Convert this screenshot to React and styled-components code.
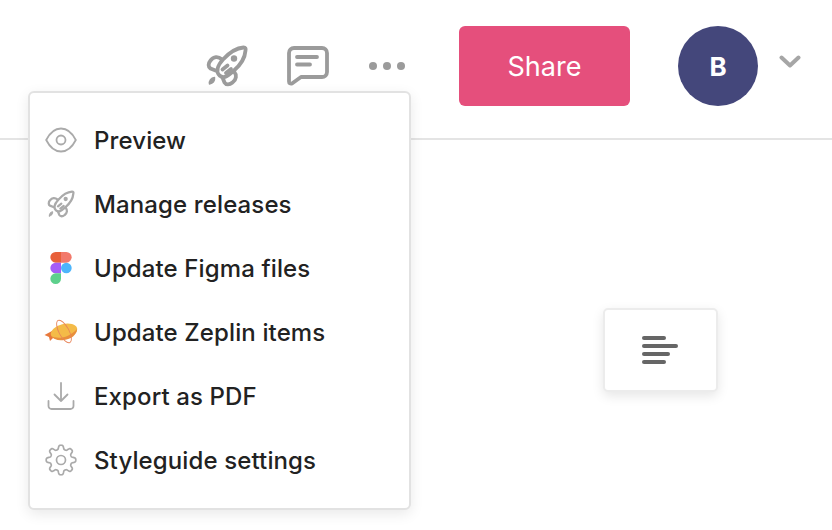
import React from "react";
import styled, {createGlobalStyle} from "styled-components";

const GlobalStyle = createGlobalStyle`
  html, body {
    margin: 0;
    padding: 0;
    background: #fff;
    overflow: hidden;
  }
  body {
    font-family: Inter, "Liberation Sans", sans-serif;
  }
`

const Page = styled.div`
  position: relative;
  width: 832px;
  height: 530px;
  background: #fff;
  overflow: hidden;
`

const Header = styled.header`
  display: flex;
  align-items: flex-start;
  height: 112px;
  padding: 26px 31px 0 206px;
  border-bottom: 2px solid #e4e4e4;
`

const HeaderIcons = styled.div`
  display: flex;
  align-items: center;
  height: 80px;
  width: 253px;
  flex: none;
`

const IconSlot = styled.div`
  display: flex;
  width: ${props => props.$width}px;
  flex: none;
`

const ShareButton = styled.button`
  width: 171px;
  height: 80px;
  flex: none;
  border: none;
  border-radius: 6px;
  background: #e54f7c;
  color: #fff;
  font-family: inherit;
  font-size: 27px;
  font-weight: 400;
`

const Avatar = styled.div`
  display: flex;
  align-items: center;
  justify-content: center;
  width: 80px;
  height: 80px;
  flex: none;
  margin-left: 48px;
  border-radius: 50%;
  background: #44477b;
  color: #fff;
  font-size: 26px;
  font-weight: 700;
`

const Chevron = styled.svg`
  flex: none;
  margin: 28px 0 0 21px;
`

const Canvas = styled.main`
  display: flex;
  justify-content: flex-end;
  padding: 168px 114px 0 0;
`

const AlignCard = styled.div`
  display: flex;
  align-items: center;
  justify-content: center;
  width: 115px;
  height: 84px;
  padding-right: 2px;
  background: #fff;
  border-radius: 5px;
  border: 2px solid #ececec;
  box-sizing: border-box;
  box-shadow: 0 4px 12px rgba(0, 0, 0, 0.1);
`

const Menu = styled.ul`
  position: absolute;
  left: 28px;
  top: 91px;
  width: 383px;
  height: 419px;
  box-sizing: border-box;
  margin: 0;
  padding: 15px 0 0 0;
  list-style: none;
  background: #fff;
  border: 2px solid #e2e2e2;
  border-radius: 6px;
  box-shadow: 0 4px 14px rgba(0, 0, 0, 0.09);
`

const MenuItem = styled.li`
  display: flex;
  align-items: center;
  height: 64px;
  color: #222;
  font-size: 24px;
  font-weight: 500;
  letter-spacing: 0.12px;
`

const ItemIcon = styled.span`
  display: flex;
  align-items: center;
  justify-content: center;
  width: 62px;
  height: 40px;
  margin-right: 2px;
  flex: none;
`

const Rocket = ({size, stroke = "#9b9b9b", width = 3.8}) => (
    <svg width={size} height={size} viewBox="0 0 42 42" fill="none" stroke={stroke} strokeWidth={width} strokeLinecap="round" strokeLinejoin="round">
        <path d="M13.500 30.500 C10 27 11 21 17 14.500 C23 8 30 3 37.500 2.500 C39.500 2.500 40 3.500 39.500 5.500 C39 13 34 20.500 27.500 26 C21 31.500 17.500 34 13.500 30.500 Z"/>
        <path d="M16 14.500 C12 11 7.500 11.500 4.500 15.500 C2 18.500 2 22 4.500 23.500 L9.500 25.500"/>
        <path d="M28 26.500 C31 30 30.500 34.500 26.500 37.500 C23.500 40 20 40 18.500 37.500 L16.500 32.500"/>
        <circle cx="28" cy="13.500" r="3.200" fill={stroke} stroke="none"/>
        <path d="M16.500 24.500 L21.500 20.500 M20 28 L25 24"/>
        <path d="M3.500 39 C3 36 5 33 8.500 32.500 C9 36 7 38.500 3.500 39 Z" fill={stroke} strokeWidth="1.500"/>
    </svg>
)

const Comment = () => (
    <svg width="42" height="40" viewBox="0 0 42 40" fill="none" stroke="#9b9b9b" strokeWidth="3.800" strokeLinecap="round" strokeLinejoin="round">
        <path d="M7 2 H35 A5 5 0 0 1 40 7 V26 A5 5 0 0 1 35 31 H14 L5 37.500 C3.500 38 2 37.500 2 35.500 V7 A5 5 0 0 1 7 2 Z"/>
        <path d="M10 11 H30 M10 18.500 H23"/>
    </svg>
)

const Dots = () => (
    <svg width="38" height="10" viewBox="0 0 38 10" fill="#9b9b9b">
        <circle cx="5" cy="5" r="4"/>
        <circle cx="19" cy="5" r="4"/>
        <circle cx="33" cy="5" r="4"/>
    </svg>
)

const Eye = () => (
    <svg width="32" height="26" viewBox="0 0 32 26" fill="none" stroke="#aaa" strokeWidth="1.800">
        <path d="M1.200 13 C5 5.500 10 1.500 16 1.500 C22 1.500 27 5.500 30.800 13 C27 20.500 22 24.500 16 24.500 C10 24.500 5 20.500 1.200 13 Z"/>
        <circle cx="16" cy="13" r="4.500"/>
    </svg>
)

const Figma = () => (
    <svg width="22" height="32" viewBox="0 0 38 57">
        <path fill="#e8603a" d="M0 9.500A9.500 9.500 0 0 0 9.500 19H19V0H9.500A9.500 9.500 0 0 0 0 9.500z"/>
        <path fill="#f2796b" d="M19 0v19h9.500a9.500 9.500 0 1 0 0-19H19z"/>
        <path fill="#a55cf5" d="M0 28.500A9.500 9.500 0 0 0 9.500 38H19V19H9.500A9.500 9.500 0 0 0 0 28.500z"/>
        <path fill="#4db5fb" d="M19 28.500a9.500 9.500 0 1 1 19 0 9.500 9.500 0 0 1-19 0z"/>
        <path fill="#5dd08c" d="M0 47.500A9.500 9.500 0 0 1 9.500 38H19v9.500a9.500 9.500 0 1 1-19 0z"/>
    </svg>
)

const Zeppelin = () => (
    <svg width="34" height="28" viewBox="0 0 34 28" fill="none">
        <path fill="#e8793c" d="M0.500 17 L8 13 L10 19 L6 23 L5 19 Z"/>
        <ellipse cx="20" cy="13.500" rx="13.500" ry="7.500" transform="rotate(-14 20 13.500)" fill="#f4bb48"/>
        <path fill="#e98f3c" d="M7 18 C13 21 24 21 33 11 C33 17 27 21 20 22 C14 23 9 21 7 18 Z"/>
        <ellipse cx="20" cy="13.500" rx="5" ry="12.500" transform="rotate(-28 20 13.500)" stroke="#e8855a" strokeWidth="0.900"/>
    </svg>
)

const Export = () => (
    <svg width="28" height="30" viewBox="0 0 28 30" fill="none" stroke="#aaa" strokeWidth="1.800" strokeLinecap="round" strokeLinejoin="round">
        <path d="M14 2 V20 M7.500 13.500 L14 20 L20.500 13.500"/>
        <path d="M1.500 20 V25 A3 3 0 0 0 4.500 28 H23.500 A3 3 0 0 0 26.500 25 V20"/>
    </svg>
)

// scalloped outline with 8 teeth
const gearPath = () => {
    const points = [];
    for (let i = 0; i < 240; i++) {
        const angle = (i / 240) * Math.PI * 2;
        const r = 12.8 + 2.1 * Math.tanh(1.8 * Math.cos(angle * 8));
        points.push(`${(16 + r * Math.sin(angle)).toFixed(2)} ${(16 - r * Math.cos(angle)).toFixed(2)}`);
    }
    return `M${points.join(" L")} Z`;
}

const Gear = () => (
    <svg width="32" height="32" viewBox="0 0 32 32" fill="none" stroke="#aaa" strokeWidth="1.700">
        <path d={gearPath()}/>
        <circle cx="16" cy="16" r="4.500"/>
    </svg>
)

const AlignIcon = () => (
    <svg width="36" height="28" viewBox="0 0 36 28" fill="#666">
        <rect x="0" y="0" width="24" height="4" rx="2"/>
        <rect x="0" y="8" width="36" height="4" rx="2"/>
        <rect x="0" y="16" width="28" height="4" rx="2"/>
        <rect x="0" y="24" width="24" height="4" rx="2"/>
    </svg>
)

const items = [
    {label: "Preview", icon: <Eye/>},
    {label: "Manage releases", icon: <Rocket size={28} stroke="#aaa" width={3.4}/>},
    {label: "Update Figma files", icon: <Figma/>},
    {label: "Update Zeplin items", icon: <Zeppelin/>},
    {label: "Export as PDF", icon: <Export/>},
    {label: "Styleguide settings", icon: <Gear/>},
];

const App = () => {
    return (
        <Page>
            <GlobalStyle/>
            <Header>
                <HeaderIcons>
                    <IconSlot $width={81}><Rocket size={42}/></IconSlot>
                    <IconSlot $width={81}><Comment/></IconSlot>
                    <IconSlot $width={91}><Dots/></IconSlot>
                </HeaderIcons>
                <ShareButton>Share</ShareButton>
                <Avatar>B</Avatar>
                <Chevron width="22" height="16" viewBox="0 0 22 16" fill="none" stroke="#a6a6a6" strokeWidth="4" strokeLinecap="round" strokeLinejoin="round">
                    <path d="M2.500 3.500 L11 11.500 L19.500 3.500"/>
                </Chevron>
            </Header>
            <Canvas>
                <AlignCard><AlignIcon/></AlignCard>
            </Canvas>
            <Menu>
                {items.map(item => (
                    <MenuItem key={item.label}>
                        <ItemIcon>{item.icon}</ItemIcon>
                        {item.label}
                    </MenuItem>
                ))}
            </Menu>
        </Page>
    );
}

export default App;
